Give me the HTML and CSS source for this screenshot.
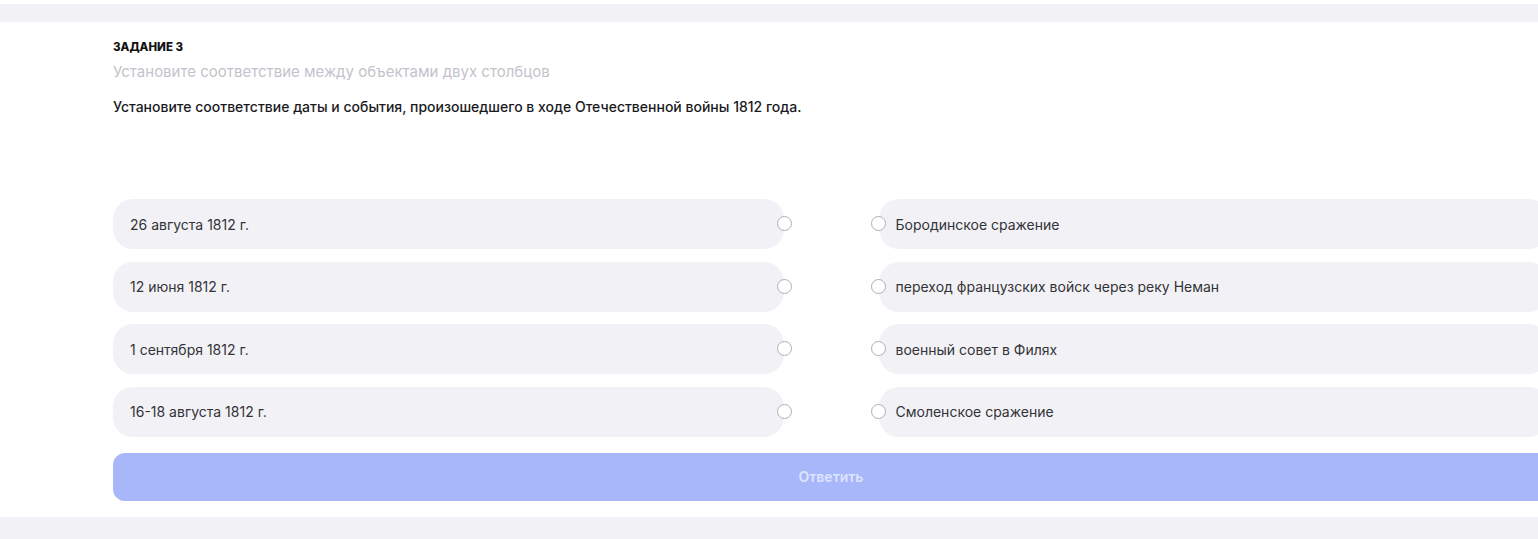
FILE: index.html
```html
<!DOCTYPE html>
<html lang="ru">
<head>
  <meta charset="UTF-8" />
  <title>Задание 3</title>
  <link rel="stylesheet" href="styles.css">
</head>
<body>

  <div class="polosa polosa-verh"></div>

  <div class="zadanie">
    <div class="zagolovok">Задание 3</div>
    <div class="podskazka">Установите соответствие между объектами двух столбцов</div>
    <div class="vopros">Установите соответствие даты и события, произошедшего в ходе Отечественной войны 1812 года.</div>

    <div class="sootvetstvie">
      <div class="punkt levyj">26 августа 1812 г.<span class="krug"></span></div>
      <div class="punkt pravyj"><span class="krug"></span>Бородинское сражение</div>

      <div class="punkt levyj">12 июня 1812 г.<span class="krug"></span></div>
      <div class="punkt pravyj"><span class="krug"></span>переход французских войск через реку Неман</div>

      <div class="punkt levyj">1 сентября 1812 г.<span class="krug"></span></div>
      <div class="punkt pravyj"><span class="krug"></span>военный совет в Филях</div>

      <div class="punkt levyj">16-18 августа 1812 г.<span class="krug"></span></div>
      <div class="punkt pravyj"><span class="krug"></span>Смоленское сражение</div>
    </div>

    <button class="otvetit" disabled>Ответить</button>
  </div>

  <div class="polosa polosa-niz"></div>

</body>
</html>
```

FILE: styles.css
```css
body {
  margin: 0;
  background: #fff;
  font-family: Inter, "Noto Sans", sans-serif;
  color: #1f1f24;
  overflow: hidden;
}

/* серые полосы сверху и снизу */
.polosa {
  background: #f2f2f6;
}

.polosa-verh {
  margin-top: 4px;
  height: 18px;
}

.polosa-niz {
  height: 22px;
}

.zadanie {
  width: 1436px;
  padding: 18px 0 16px 113px;
}

.zagolovok {
  font-size: 11.5px;
  line-height: 14px;
  font-weight: 800;
  text-transform: uppercase;
  color: #111;
}

.podskazka {
  margin-top: 8px;
  font-size: 15px;
  line-height: 20px;
  color: #c3c3cb;
}

.vopros {
  margin-top: 15px;
  font-size: 14px;
  line-height: 20px;
  font-weight: 500;
  color: #1a1a1e;
}

.sootvetstvie {
  display: grid;
  grid-template-columns: 1fr 1fr;
  column-gap: 95px;
  row-gap: 12.5px;
  margin-top: 82px;
}

.punkt {
  position: relative;
  display: flex;
  align-items: center;
  height: 50px;
  padding: 0 17px;
  background: #f2f2f6;
  border-radius: 20px;
  font-size: 14px;
  color: #333338;
}

.krug {
  position: absolute;
  top: 50%;
  width: 13px;
  height: 13px;
  margin-top: -8px;
  border: 1.5px solid #b0b0b4;
  border-radius: 50%;
  background: #fff;
}

.levyj .krug {
  right: -8px;
}

.pravyj .krug {
  left: -8px;
}

.otvetit {
  display: block;
  width: 100%;
  height: 48px;
  margin-top: 16px;
  border: none;
  border-radius: 12px;
  background: #a7b7f9;
  font-family: inherit;
  font-size: 14px;
  font-weight: 600;
  color: #dde4ff;
}
```
